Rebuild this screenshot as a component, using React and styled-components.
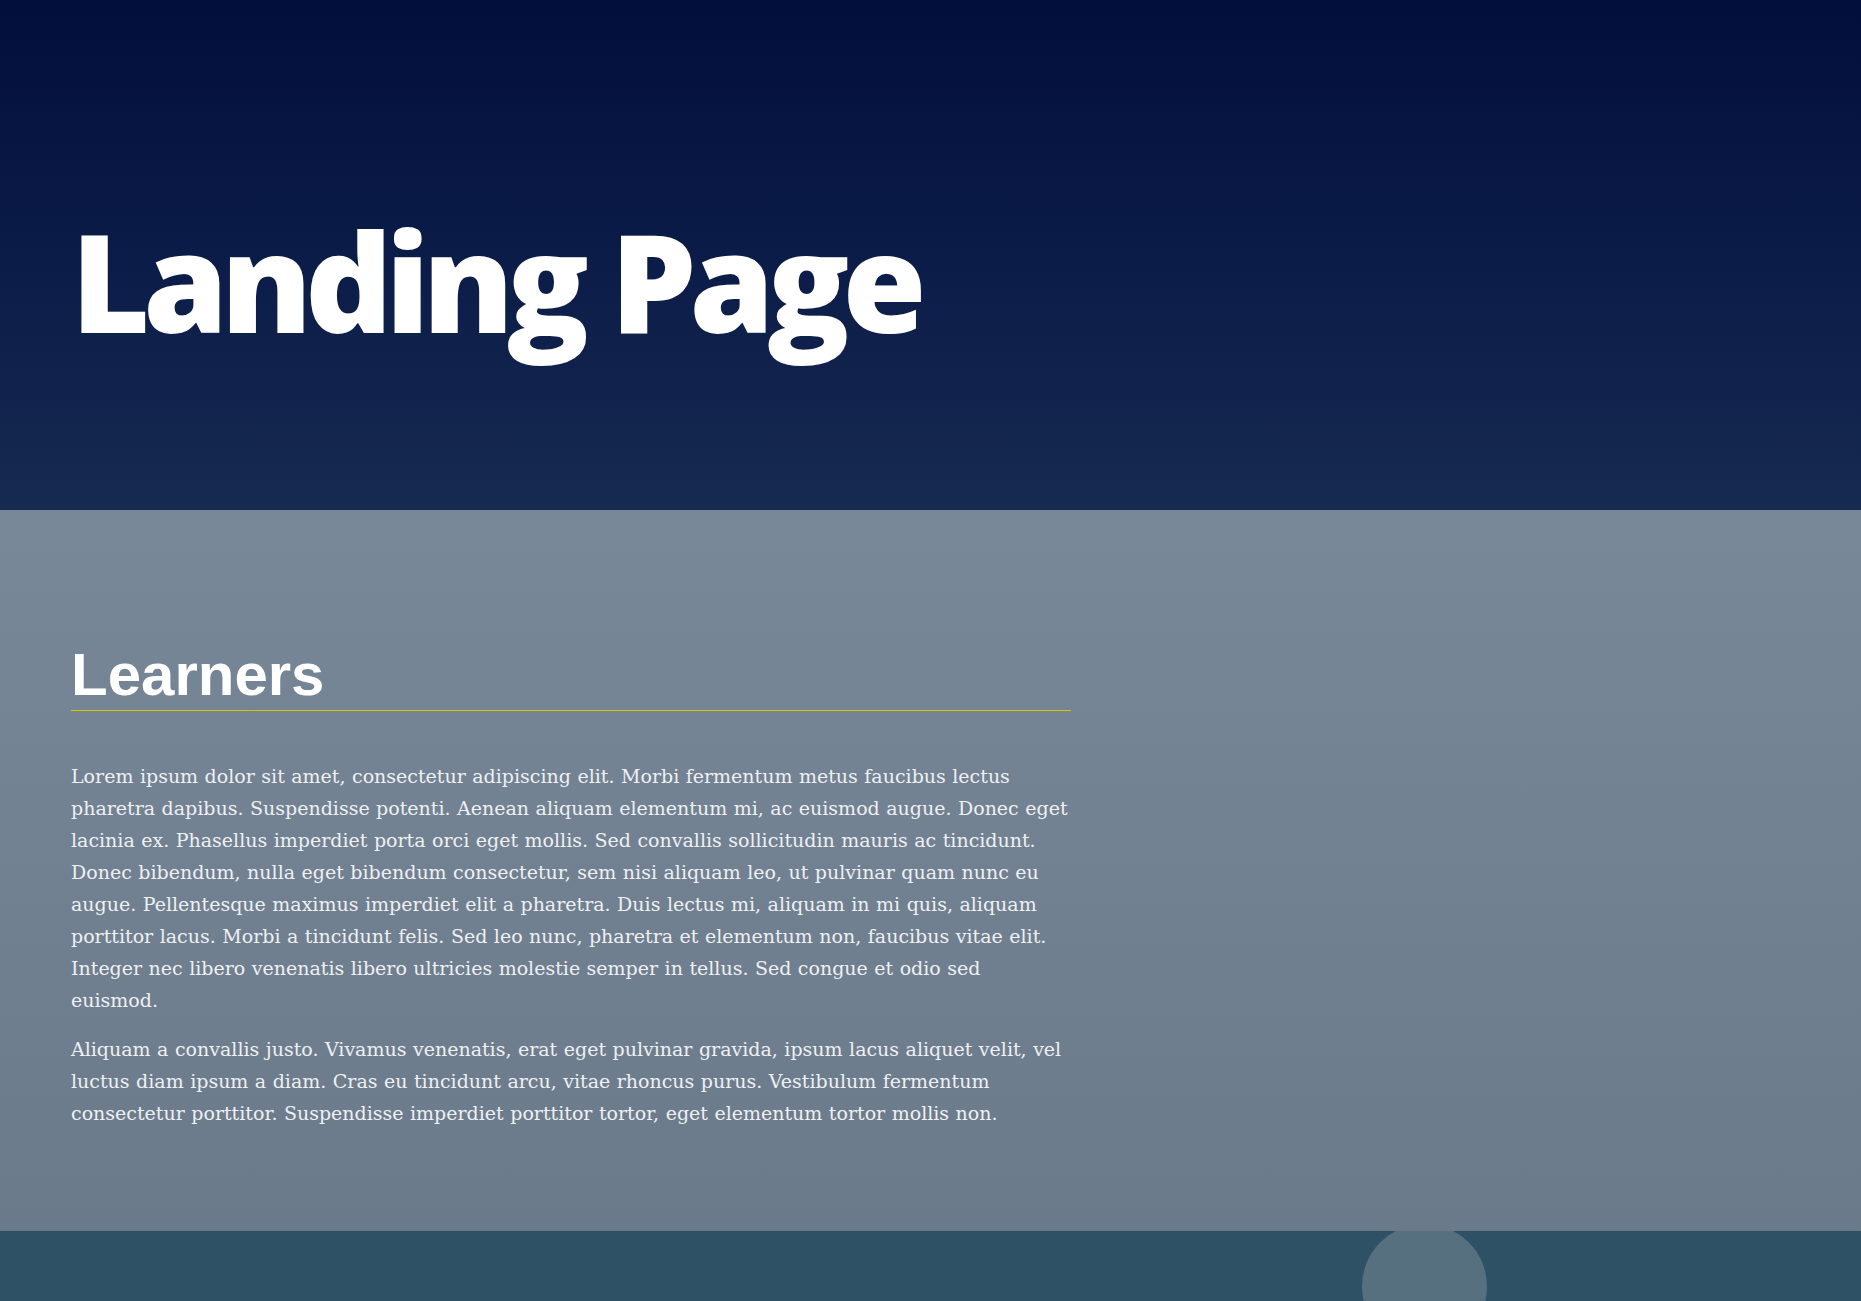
import React from "react";
import styled, { createGlobalStyle } from "styled-components";

const Global = createGlobalStyle`
  html, body { margin: 0; padding: 0; }
  body { background: #2f5165; font-family: "DejaVu Serif", serif; overflow: hidden; }
`;

const Page = styled.div`
  display: flex;
  flex-direction: column;
  min-height: 100vh;
`;

const Hero = styled.header`
  box-sizing: border-box;
  height: 510px;
  padding: 212px 71px 0;
  background: linear-gradient(180deg, #020e3c 0%, #0c1d49 55%, #172a50 100%);
`;

const Title = styled.h1`
  margin: 0;
  font-family: "Open Sans", "Noto Sans", sans-serif;
  font-weight: 800;
  font-size: 136px;
  line-height: 137px;
  letter-spacing: -7px;
  color: #ffffff;
`;

const Section = styled.section`
  box-sizing: border-box;
  padding: 135px 71px 102px;
  background: linear-gradient(180deg, #788899 0%, #6b7a8b 100%);
`;

const Column = styled.div`
  width: 1000px;
`;

const Heading = styled.h2`
  margin: 0 0 49px;
  padding-bottom: 5px;
  border-bottom: 1px solid #d3c600;
  font-family: "Liberation Sans", Arial, sans-serif;
  font-weight: 700;
  font-size: 60px;
  line-height: 60px;
  color: #ffffff;
`;

const Para = styled.p`
  margin: 0 0 17px;
  font-family: "DejaVu Serif", serif;
  font-size: 19px;
  line-height: 32px;
  letter-spacing: 0;
  word-spacing: 0.45px;
  color: #eef0f2;
  &:last-child { margin-bottom: 0; }
`;

const Band = styled.footer`
  position: relative;
  flex: 1;
  min-height: 69px;
  overflow: hidden;
  background: #2f5165;
`;

const Bubble = styled.div`
  position: absolute;
  left: 1362px;
  top: -7px;
  width: 125px;
  height: 125px;
  border-radius: 50%;
  background: #56707f;
`;

export default function App() {
  return (
    <Page>
      <Global />
      <Hero>
        <Title>Landing Page</Title>
      </Hero>
      <Section>
        <Column>
          <Heading>Learners</Heading>
          <Para>
            Lorem ipsum dolor sit amet, consectetur adipiscing elit. Morbi fermentum metus faucibus lectus
            pharetra dapibus. Suspendisse potenti. Aenean aliquam elementum mi, ac euismod augue. Donec eget
            lacinia ex. Phasellus imperdiet porta orci eget mollis. Sed convallis sollicitudin mauris ac tincidunt.
            Donec bibendum, nulla eget bibendum consectetur, sem nisi aliquam leo, ut pulvinar quam nunc eu
            augue. Pellentesque maximus imperdiet elit a pharetra. Duis lectus mi, aliquam in mi quis, aliquam
            porttitor lacus. Morbi a tincidunt felis. Sed leo nunc, pharetra et elementum non, faucibus vitae elit.
            Integer nec libero venenatis libero ultricies molestie semper in tellus. Sed congue et odio sed
            euismod.
          </Para>
          <Para>
            Aliquam a convallis justo. Vivamus venenatis, erat eget pulvinar gravida, ipsum lacus aliquet velit, vel
            luctus diam ipsum a diam. Cras eu tincidunt arcu, vitae rhoncus purus. Vestibulum fermentum
            consectetur porttitor. Suspendisse imperdiet porttitor tortor, eget elementum tortor mollis non.
          </Para>
        </Column>
      </Section>
      <Band>
        <Bubble />
      </Band>
    </Page>
  );
}
